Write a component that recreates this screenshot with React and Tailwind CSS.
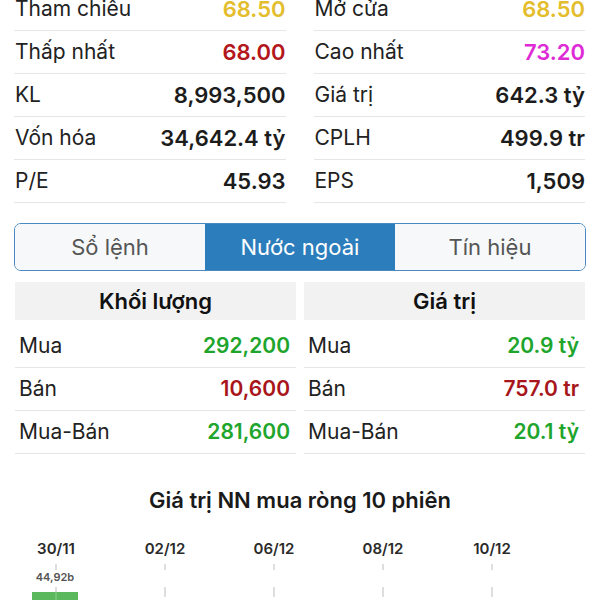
const stats = [
  ["Tham chiêu", "68.50", "text-[#e3bd2c]", "Mở cửa", "68.50", "text-[#e3bd2c]"],
  ["Thấp nhất", "68.00", "text-[#b3161b]", "Cao nhất", "73.20", "text-[#de2bd6]"],
  ["KL", "8,993,500", "text-[#1c1c1c]", "Giá trị", "642.3 tỷ", "text-[#1c1c1c]"],
  ["Vốn hóa", "34,642.4 tỷ", "text-[#1c1c1c]", "CPLH", "499.9 tr", "text-[#1c1c1c]"],
  ["P/E", "45.93", "text-[#1c1c1c]", "EPS", "1,509", "text-[#1c1c1c]"],
];

const foreign = [
  ["Mua", "292,200", "text-[#20a52c]", "20.9 tỷ", "text-[#20a52c]"],
  ["Bán", "10,600", "text-[#a8151b]", "757.0 tr", "text-[#a8151b]"],
  ["Mua-Bán", "281,600", "text-[#20a52c]", "20.1 tỷ", "text-[#20a52c]"],
];

const dates = [
  ["30/11", 56],
  ["02/12", 165],
  ["06/12", 274],
  ["08/12", 383],
  ["10/12", 492],
];

const StatRow = ({ label, value, color }) => (
  <div className="flex items-center justify-between h-[43px] border-b border-[#e6e6e6] pl-[1px]">
    <span className="text-[#222]">{label}</span>
    <span className={`font-semibold text-[22px] ${color}`}>{value}</span>
  </div>
);

const Chart = () => (
  <svg width="600" height="70" className="block">
    {dates.map(([d, x]) => (
      <g key={d}>
        <text x={x} y="17" textAnchor="middle" fontSize="15" fontWeight="600" fill="#2a2a2a">{d}</text>
        <line x1={x} y1="27" x2={x} y2="33" stroke="#bdbdbd" strokeWidth="1" />
        <line x1={x} y1="50" x2={x} y2="70" stroke="#bdbdbd" strokeWidth="1" strokeDasharray="10 15" />
      </g>
    ))}
    <rect x="32" y="55" width="46" height="15" fill="#5cb85c" />
    <line x1="56" y1="55" x2="56" y2="70" stroke="#8fd08f" strokeWidth="1" />
    <text x="55" y="44" textAnchor="middle" fontSize="11" fontWeight="600" fill="#555">44,92b</text>
  </svg>
);

const App = () => {
  return (
    <div className="w-[600px] h-[600px] overflow-hidden bg-white font-['Inter','Liberation_Sans',sans-serif] text-[21px]">
      <div className="grid grid-cols-2 gap-x-[28px] pl-[14px] pr-[15px] -mt-[12px]">
        <div>
          {stats.map((s) => (
            <StatRow key={s[0]} label={s[0]} value={s[1]} color={s[2]} />
          ))}
        </div>
        <div>
          {stats.map((s) => (
            <StatRow key={s[3]} label={s[3]} value={s[4]} color={s[5]} />
          ))}
        </div>
      </div>

      <div className="mx-[14px] mt-[20px] h-[48px] grid grid-cols-3 border-[1.5px] border-[#4a88bf] rounded-[7px] overflow-hidden text-[22px]">
        <div className="flex items-center justify-center bg-[#f6f8fa] text-[#555]">Sổ lệnh</div>
        <div className="flex items-center justify-center bg-[#2c7dbb] text-white">Nước ngoài</div>
        <div className="flex items-center justify-center bg-[#f6f8fa] text-[#555]">Tín hiệu</div>
      </div>

      <div className="grid grid-cols-2 gap-x-[8px] pl-[15px] pr-[15px] mt-[11px]">
        <div className="h-[38px] flex items-center justify-center bg-[#f2f2f2] font-semibold text-[#111] text-[22px]">Khối lượng</div>
        <div className="h-[38px] flex items-center justify-center bg-[#f2f2f2] font-semibold text-[#111] text-[22px]">Giá trị</div>
      </div>

      <div className="grid grid-cols-2 gap-x-[8px] pl-[15px] pr-[15px] mt-[5px]">
        <div>
          {foreign.map((f) => (
            <div key={f[0]} className="flex items-center justify-between h-[43px] border-b border-[#e6e6e6] pl-[4px] pr-[6px]">
              <span className="text-[#222]">{f[0]}</span>
              <span className={`font-semibold ${f[2]}`}>{f[1]}</span>
            </div>
          ))}
        </div>
        <div>
          {foreign.map((f) => (
            <div key={f[0]} className="flex items-center justify-between h-[43px] border-b border-[#e6e6e6] pl-[4px] pr-[6px]">
              <span className="text-[#222]">{f[0]}</span>
              <span className={`font-semibold ${f[4]}`}>{f[3]}</span>
            </div>
          ))}
        </div>
      </div>

      <div className="mt-[30px] text-center font-semibold text-[22px] text-[#1a1a1a]">Giá trị NN mua ròng 10 phiên</div>

      <div className="mt-[20px]">
        <Chart />
      </div>
    </div>
  );
};

export default App;
